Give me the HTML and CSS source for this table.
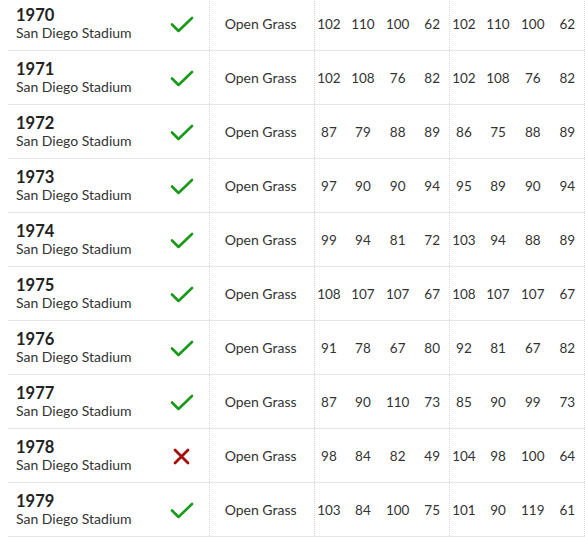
FILE: index.html
```html
<!DOCTYPE html>
<html>
<head>
<meta charset="utf-8">
<link rel="stylesheet" href="styles.css">
</head>
<body>
<table class="seasons">
  <colgroup>
    <col class="c-year"><col class="c-flag"><col class="c-surf">
    <col class="c-num"><col class="c-num"><col class="c-num"><col class="c-num">
    <col class="c-num"><col class="c-num"><col class="c-num"><col class="c-num">
  </colgroup>
  <tbody id="rows"></tbody>
</table>
<script>
const data = [
  [1970,1,[102,110,100,62,102,110,100,62]],
  [1971,1,[102,108,76,82,102,108,76,82]],
  [1972,1,[87,79,88,89,86,75,88,89]],
  [1973,1,[97,90,90,94,95,89,90,94]],
  [1974,1,[99,94,81,72,103,94,88,89]],
  [1975,1,[108,107,107,67,108,107,107,67]],
  [1976,1,[91,78,67,80,92,81,67,82]],
  [1977,1,[87,90,110,73,85,90,99,73]],
  [1978,0,[98,84,82,49,104,98,100,64]],
  [1979,1,[103,84,100,75,101,90,119,61]]
];
const check = '<svg class="icon" width="24" height="17" viewBox="0 0 24 17"><path d="M2 8.5 L8.5 15 L22 2" fill="none" stroke="#1a9a1a" stroke-width="2.6" stroke-linecap="round" stroke-linejoin="round"/></svg>';
const cross = '<svg class="icon" width="17" height="17" viewBox="0 0 17 17"><path d="M2 2 L15 15 M15 2 L2 15" fill="none" stroke="#a50d0d" stroke-width="2.8" stroke-linecap="round"/></svg>';
const tb = document.getElementById('rows');
tb.innerHTML = data.map(([y, ok, n]) =>
  '<tr><td class="year"><div class="yr">' + y + '</div><div class="st">San Diego Stadium</div></td>' +
  '<td class="flag">' + (ok ? check : cross) + '</td>' +
  '<td class="surf">Open Grass</td>' +
  n.map((v, i) => '<td class="num n' + (i % 4 + 1) + (i % 4 === 0 ? ' grp' : '') + (i === 7 ? ' last' : '') + '">' + v + '</td>').join('') +
  '</tr>').join('');
</script>
</body>
</html>
```
FILE: styles.css
```css
html, body {
  background: #fff;
}
body {
  margin: 0 0 0 8px;
  font-family: "Source Sans Pro", Lato, "Noto Sans", sans-serif;
  color: #333;
}
.seasons {
  margin-top: -3px;
  width: 577px;
  border-collapse: collapse;
  table-layout: fixed;
}
.c-year { width: 147px; }
.c-flag { width: 54px; }
.c-surf { width: 105px; }
.c-num { width: 33.75px; }
.seasons td {
  height: 53px;
  padding: 0;
  border-bottom: 1px solid #e6e6e6;
  vertical-align: middle;
}
.seasons td.year {
  padding-left: 8px;
}
.yr {
  font-weight: 700;
  font-size: 16.5px;
  line-height: 18px;
  color: #222;
}
.st {
  font-size: 14px;
  line-height: 17px;
  color: #333;
}
.flag {
  text-align: center;
}
.icon {
  display: block;
  margin: 2px auto 0;
}
.seasons td.surf {
  border-left: 1px dotted #d6d6d6;
  padding-left: 15px;
  font-size: 14px;
  color: #333;
}
.num {
  text-align: center;
  font-size: 13.5px;
  color: #333;
}
.seasons td.n1 { padding-right: 5px; }
.seasons td.n2 { padding-right: 4px; }
.seasons td.n3 { padding-right: 2px; }
.seasons td.n4 { padding-right: 0; }
.seasons td.grp {
  border-left: 1px dotted #d6d6d6;
}
.seasons td.last {
  border-right: 1px dotted #d6d6d6;
}
```
